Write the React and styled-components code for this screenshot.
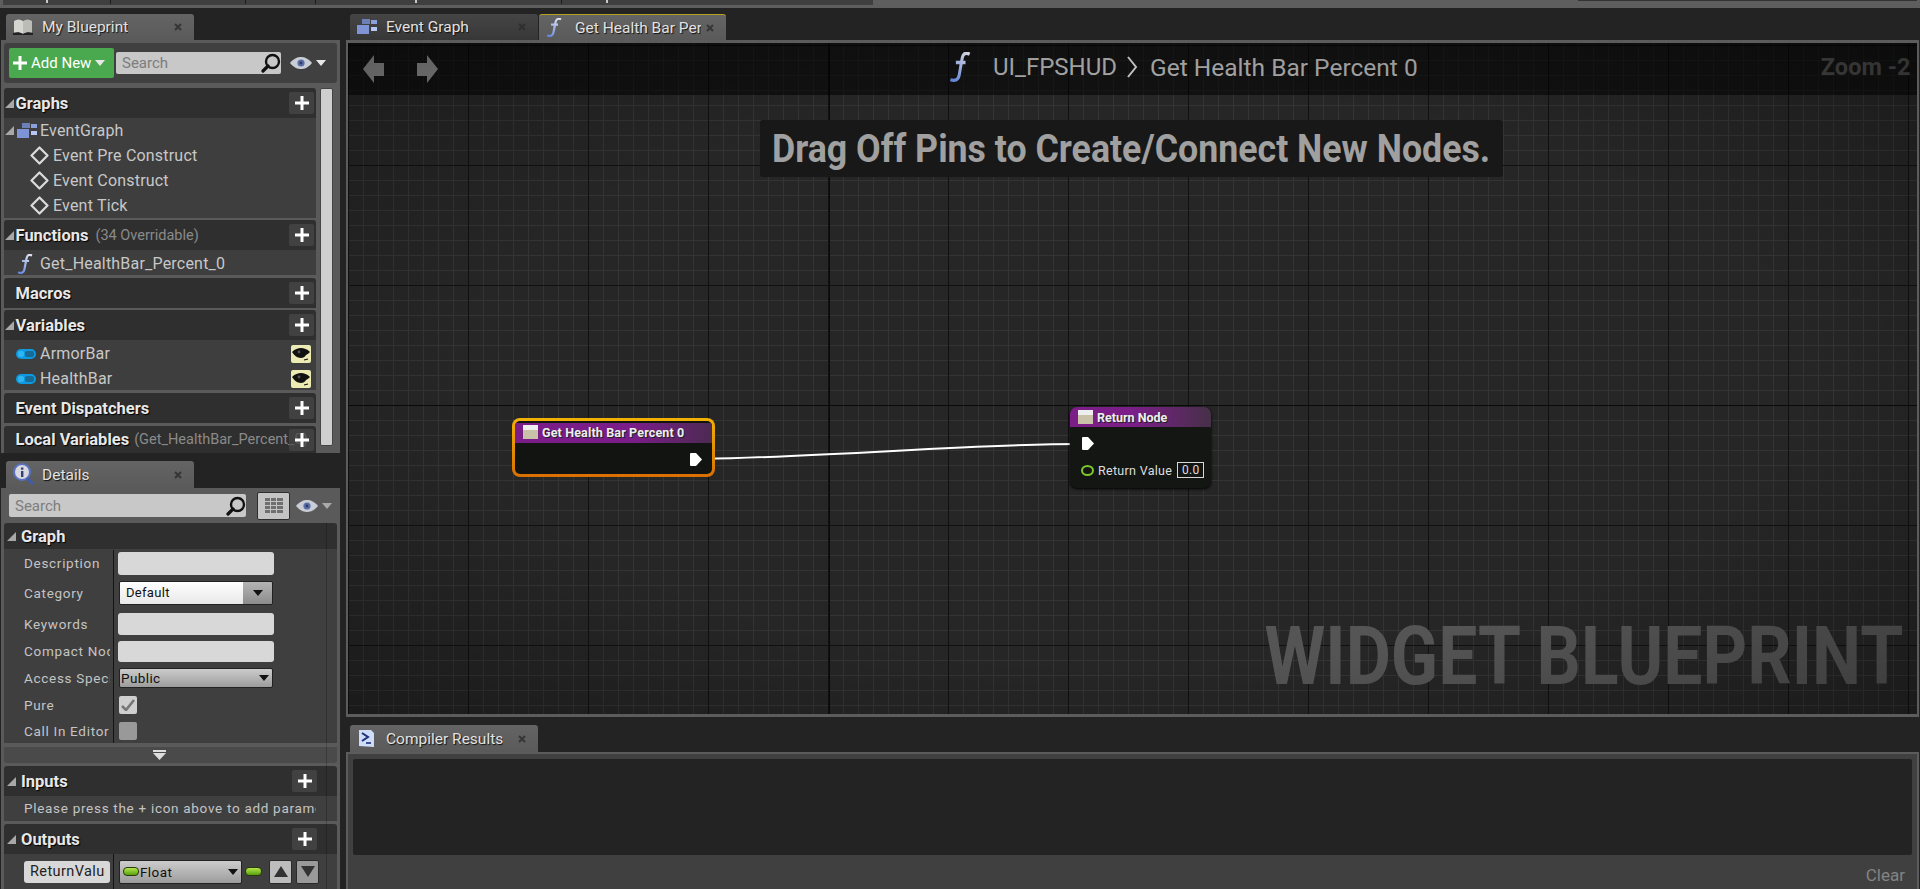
import React from 'react';
import styled, { createGlobalStyle } from 'styled-components';

const GlobalStyle = createGlobalStyle`
  html, body {
    margin: 0;
    padding: 0;
    height: 100%;
    overflow: hidden;
    background: #232323;
  }
  body {
    font-family: Roboto, "Liberation Sans", sans-serif;
    font-size: 14px;
    color: #d8d8d8;
  }
`;

/* icons */

const PlusIcon = ({ size = 14 }) => (
  <svg width={size} height={size} viewBox="0 0 14 14">
    <path d="M5.500 0h3v5.500H14v3H8.500V14h-3V8.500H0v-3h5.500z" fill="#fff" />
  </svg>
);

const Caret = ({ color = '#e8e8e8', w = 10, h = 6 }) => (
  <svg width={w} height={h} viewBox="0 0 10 6">
    <path d="M0 0h10L5 6z" fill={color} />
  </svg>
);

const Eye = () => (
  <svg width="22" height="12" viewBox="0 0 22 12">
    <path d="M0 6C4 1 8 0 11 0s7 1 11 6c-4 5-8 6-11 6S4 11 0 6z" fill="#c9cdd6" />
    <circle cx="11" cy="6" r="3.600" fill="#5a6ea8" />
    <circle cx="11" cy="6" r="1.400" fill="#2e3a66" />
  </svg>
);

const Magnifier = ({ size = 20 }) => (
  <svg width={size} height={size} viewBox="0 0 20 20">
    <circle cx="11.500" cy="8.500" r="6.500" fill="none" stroke="#111" strokeWidth="2.400" />
    <path d="M7 13l-5 5" stroke="#111" strokeWidth="3.200" strokeLinecap="round" />
  </svg>
);

const Triangle = () => (
  <svg width="9" height="9" viewBox="0 0 9 9">
    <path d="M9 0v9H0z" fill="#a8a8a8" />
  </svg>
);

const GraphIcon = ({ w = 20, h = 16 }) => (
  <svg width={w} height={h} viewBox="0 0 20 16">
    <rect x="5" y="0" width="8" height="5" fill="#6e7fb8" />
    <rect x="14" y="1" width="6" height="4" fill="#8aa0dc" />
    <rect x="0" y="6" width="12" height="9" fill="#7f94d6" />
    <rect x="14" y="8" width="6" height="4" fill="#b6c6f2" />
  </svg>
);

const EventIcon = () => (
  <svg width="19" height="19" viewBox="0 0 19 19">
    <path d="M9.500 1.500L17.500 9.500 9.500 17.500 1.500 9.500z" fill="none" stroke="#dcdcdc" strokeWidth="2.200" strokeLinejoin="round" />
  </svg>
);

const FuncIcon = ({ w = 16, h = 20 }) => (
  <svg width={w} height={h} viewBox="0 0 16 20" preserveAspectRatio="none">
    <defs>
      <linearGradient id="fn" gradientUnits="userSpaceOnUse" x1="1" y1="20" x2="15" y2="0">
        <stop offset="0" stopColor="#5f80dc" />
        <stop offset="1" stopColor="#e8eaf4" />
      </linearGradient>
    </defs>
    <path
      d="M15 1.500C12 0 10.200 1 9.500 4.500L7.500 15C7 18.500 4.500 19.500 1 18.500M5 7h7"
      fill="none"
      stroke="url(#fn)"
      strokeWidth="2.200"
    />
  </svg>
);

const VarPill = () => (
  <svg width="20" height="10" viewBox="0 0 20 10">
    <rect x="0" y="0" width="20" height="10" rx="5" fill="#0d9ae0" />
    <rect x="9" y="2" width="9" height="6" rx="2" fill="#1a6a96" />
    <rect x="2" y="2" width="6" height="6" rx="2" fill="#2fb6f2" />
  </svg>
);

const EyeBadge = () => (
  <svg width="20" height="18" viewBox="0 0 20 18">
    <rect width="20" height="18" rx="2" fill="#ecebb4" />
    <path d="M1 7c3-3 6-4 9-4s6 1 9 4c-1 1-2 2-4 3-1 2-3 3-5 3-4 0-7-3-9-6z" fill="#111" />
    <circle cx="8" cy="7" r="1.400" fill="#555" />
    <path d="M13 15l4-1" stroke="#111" strokeWidth="1.200" />
  </svg>
);

const BookIcon = () => (
  <svg width="20" height="18" viewBox="0 0 20 18">
    <path d="M1 3c3-2 6-2 9 0v13c-3-2-6-2-9 0z" fill="#d6d6d0" />
    <path d="M10 3c3-2 6-2 9 0v13c-3-2-6-2-9 0z" fill="#bcbcb6" />
    <path d="M0 15c3-1 7-1 10 1 3-2 7-2 10-1v2H0z" fill="#222" />
  </svg>
);

const InfoIcon = () => (
  <svg width="21" height="23" viewBox="0 0 21 23">
    <circle cx="9" cy="9" r="8" fill="#d8d8e0" stroke="#5a72c0" strokeWidth="2" />
    <rect x="8" y="8" width="2.400" height="6" fill="#33406c" />
    <rect x="8" y="4.500" width="2.400" height="2.200" fill="#33406c" />
    <path d="M14 15l6 6" stroke="#3f5bb4" strokeWidth="2.600" />
  </svg>
);

const ConsoleIcon = () => (
  <svg width="18" height="19" viewBox="0 0 18 19">
    <path d="M2 1h12l3 3v14l-15-1z" fill="#cfdcf8" />
    <path d="M5 4l6 4-6 4" fill="none" stroke="#1c2f78" strokeWidth="2" />
    <path d="M9 14h5" stroke="#1c2f78" strokeWidth="1.600" />
  </svg>
);

const ListIcon = () => (
  <svg width="18" height="18" viewBox="0 0 18 18">
    {[1, 5, 9, 13].map(y => (
      <g key={y} fill="#6f6f6f">
        <rect x="0" y={y} width="5" height="3" />
        <rect x="6" y={y} width="5" height="3" />
        <rect x="12" y={y} width="6" height="3" />
      </g>
    ))}
  </svg>
);

const CloseIcon = () => (
  <svg width="8" height="8" viewBox="0 0 8 8">
    <path d="M1 1l6 6M7 1L1 7" stroke="#2c2c2c" strokeWidth="2" />
  </svg>
);

const NavArrow = ({ flip }) => (
  <svg width="22" height="29" viewBox="0 0 22 29" style={flip ? { transform: 'scaleX(-1)' } : undefined}>
    <path d="M11 0L0 14l11 14V21h10V8H11z" fill="#858585" />
  </svg>
);

const ExecPin = () => (
  <svg width="12" height="13" viewBox="0 0 12 13">
    <path d="M0 1a1 1 0 0 1 1-1h5l6 6.500L6 13H1a1 1 0 0 1-1-1z" fill="#fff" />
  </svg>
);

const NodeGlyph = () => (
  <svg width="15" height="14" viewBox="0 0 15 14">
    <rect width="15" height="5" fill="#eee" />
    <rect y="5" width="15" height="9" fill="#c9c2a8" />
  </svg>
);

const Check = () => (
  <svg width="14" height="12" viewBox="0 0 14 12">
    <path d="M1 7l4 4 8-10" fill="none" stroke="#777" strokeWidth="2.600" />
  </svg>
);

/* page */

const GRAPHS = ['Event Pre Construct', 'Event Construct', 'Event Tick'];

function App() {
  return (
    <Page>
      <GlobalStyle />
      <TopStrip>
        <TopBar>
          <TopTick $left={43} $light />
          <TopTick $left={107} />
          <TopTick $left={242} />
          <TopTick $left={312} />
          <TopTick $left={412} $light />
          <TopTick $left={558} />
          <TopTick $left={603} $light />
        </TopBar>
        <TopRightLine />
      </TopStrip>
      <Columns>
        <LeftColumn>
          <TabBar>
            <Tab $w={188}>
              <TabIcon><BookIcon /></TabIcon>
              <TabLabel>My Blueprint</TabLabel>
              <TabClose><CloseIcon /></TabClose>
            </Tab>
          </TabBar>
          <BlueprintPanel>
            <Toolbar>
              <AddNew>
                <PlusIcon />
                <span>Add New</span>
                <Caret />
              </AddNew>
              <SearchBox $w={165} $h={22}>
                <SearchHint>Search</SearchHint>
                <Magnifier />
              </SearchBox>
              <EyeButton>
                <Eye />
                <Caret />
              </EyeButton>
            </Toolbar>
            <TreeArea>
              <Tree>
                <SectionHeader $gap={0}>
                  <Triangle />
                  <HeaderTitle>Graphs</HeaderTitle>
                  <AddButton><PlusIcon /></AddButton>
                </SectionHeader>
                <SectionBody>
                  <TreeRow $indent={1} $gap={3}>
                    <Triangle />
                    <GraphIcon />
                    <span>EventGraph</span>
                  </TreeRow>
                  {GRAPHS.map(name => (
                    <TreeRow key={name} $indent={26} $gap={4}>
                      <EventIcon />
                      <span>{name}</span>
                    </TreeRow>
                  ))}
                </SectionBody>

                <SectionHeader>
                  <Triangle />
                  <HeaderTitle>Functions</HeaderTitle>
                  <HeaderNote>(34 Overridable)</HeaderNote>
                  <AddButton><PlusIcon /></AddButton>
                </SectionHeader>
                <SectionBody>
                  <TreeRow $indent={13} $gap={7} $low>
                    <FuncIcon />
                    <span>Get_HealthBar_Percent_0</span>
                  </TreeRow>
                </SectionBody>

                <SectionHeader $gap={3}>
                  <TriangleGap />
                  <HeaderTitle>Macros</HeaderTitle>
                  <AddButton><PlusIcon /></AddButton>
                </SectionHeader>

                <SectionHeader>
                  <Triangle />
                  <HeaderTitle>Variables</HeaderTitle>
                  <AddButton><PlusIcon /></AddButton>
                </SectionHeader>
                <SectionBody>
                  <TreeRow $indent={12} $gap={4} $low>
                    <VarPill />
                    <span>ArmorBar</span>
                    <EyeSlot><EyeBadge /></EyeSlot>
                  </TreeRow>
                  <TreeRow $indent={12} $gap={4} $low>
                    <VarPill />
                    <span>HealthBar</span>
                    <EyeSlot><EyeBadge /></EyeSlot>
                  </TreeRow>
                </SectionBody>

                <SectionHeader $gap={3}>
                  <TriangleGap />
                  <HeaderTitle>Event Dispatchers</HeaderTitle>
                  <AddButton><PlusIcon /></AddButton>
                </SectionHeader>

                <SectionHeader $gap={3} $clip>
                  <TriangleGap />
                  <HeaderTitle>Local Variables</HeaderTitle>
                  <HeaderNote $under>(Get_HealthBar_Percent_0)</HeaderNote>
                  <AddButton><PlusIcon /></AddButton>
                </SectionHeader>
              </Tree>
              <ScrollTrack />
            </TreeArea>
          </BlueprintPanel>

          <DetailsTabBar>
            <Tab $w={188}>
              <TabIcon><InfoIcon /></TabIcon>
              <TabLabel>Details</TabLabel>
              <TabClose><CloseIcon /></TabClose>
            </Tab>
          </DetailsTabBar>
          <DetailsPanel>
            <DetailsSearchRow>
              <SearchBox $w={237} $h={23}>
                <SearchHint>Search</SearchHint>
                <Magnifier />
              </SearchBox>
              <GridButton><ListIcon /></GridButton>
              <EyeButton $dim>
                <Eye />
                <Caret color="#aaa" />
              </EyeButton>
            </DetailsSearchRow>
            <DetailsBody>
              <DetailHeader>
                <Triangle />
                <HeaderTitle $details>Graph</HeaderTitle>
              </DetailHeader>
              <PropTable>
                <PropRow $h={26}>
                  <PropName>Description</PropName>
                  <PropValue><TextInput $h={23} /></PropValue>
                </PropRow>
                <PropRow $h={34}>
                  <PropName>Category</PropName>
                  <PropValue>
                    <ComboBox>
                      <ComboText>Default</ComboText>
                      <ComboArrow><Caret color="#111" /></ComboArrow>
                    </ComboBox>
                  </PropValue>
                </PropRow>
                <PropRow $h={27}>
                  <PropName>Keywords</PropName>
                  <PropValue><TextInput $h={22} /></PropValue>
                </PropRow>
                <PropRow $h={28}>
                  <PropName>Compact Node Title</PropName>
                  <PropValue><TextInput $h={21} /></PropValue>
                </PropRow>
                <PropRow $h={26}>
                  <PropName>Access Specifier</PropName>
                  <PropValue>
                    <SelectBox $w={154}>
                      <span>Public</span>
                      <Caret color="#111" />
                    </SelectBox>
                  </PropValue>
                </PropRow>
                <PropRow $h={27}>
                  <PropName>Pure</PropName>
                  <PropValue><CheckBox><Check /></CheckBox></PropValue>
                </PropRow>
                <PropRow $h={25}>
                  <PropName>Call In Editor</PropName>
                  <PropValue><CheckBox $off /></PropValue>
                </PropRow>
              </PropTable>
              <ExpandStrip>
                <svg width="13" height="10" viewBox="0 0 13 10">
                  <path d="M0 0h13v2H0zM0 3h13L6.500 10z" fill="#ddd" />
                </svg>
              </ExpandStrip>

              <DetailHeader $tall>
                <Triangle />
                <HeaderTitle $details>Inputs</HeaderTitle>
                <AddButton $details><PlusIcon /></AddButton>
              </DetailHeader>
              <HintRow><HintText>Please press the + icon above to add parameters</HintText></HintRow>

              <DetailHeader $tall>
                <Triangle />
                <HeaderTitle $details>Outputs</HeaderTitle>
                <AddButton $details><PlusIcon /></AddButton>
              </DetailHeader>
              <OutputRow>
                <NameField><NameText>ReturnValue</NameText></NameField>
                <OutputControls>
                  <SelectBox $w={123} $pad={3}>
                    <TypeLabel><TypePill />Float</TypeLabel>
                    <Caret color="#111" />
                  </SelectBox>
                  <TypePill $gap />
                  <MoveButton>
                    <svg width="14" height="11" viewBox="0 0 14 11"><path d="M7 0l7 11H0z" fill="#333" /></svg>
                  </MoveButton>
                  <MoveButton $dim>
                    <svg width="14" height="11" viewBox="0 0 14 11"><path d="M0 0h14L7 11z" fill="#333" /></svg>
                  </MoveButton>
                </OutputControls>
              </OutputRow>
            </DetailsBody>
          </DetailsPanel>
        </LeftColumn>

        <RightColumn>
          <TabBar $graph>
            <Tab $w={188} $inactive>
              <TabIcon><GraphIcon /></TabIcon>
              <TabLabel>Event Graph</TabLabel>
              <TabClose><CloseIcon /></TabClose>
            </Tab>
            <Tab $w={187} $active>
              <TabIcon><FuncIcon w={16} h={19} /></TabIcon>
              <TabLabel $w={126}>Get Health Bar Percent 0</TabLabel>
              <TabClose><CloseIcon /></TabClose>
            </Tab>
          </TabBar>

          <GraphFrame>
            <GraphCanvas>
              <TitleBar>
                <NavGroup>
                  <NavArrow />
                  <NavArrow flip />
                </NavGroup>
                <Breadcrumb>
                  <FuncIcon w={22} h={30} />
                  <CrumbPrimary>UI_FPSHUD</CrumbPrimary>
                  <CrumbSep viewBox="0 0 12 24" width="12" height="24">
                    <path d="M2 2l8 10-8 10" fill="none" stroke="#c8c8c8" strokeWidth="2" />
                  </CrumbSep>
                  <CrumbName>Get Health Bar Percent 0</CrumbName>
                </Breadcrumb>
                <ZoomLabel>Zoom -2</ZoomLabel>
              </TitleBar>

              <HintBanner>
                <HintBannerText>Drag Off Pins to Create/Connect New Nodes.</HintBannerText>
              </HintBanner>

              <Wire viewBox="0 0 1568 670" width="1568" height="670">
                <path d="M354 416 C 500 413, 620 401, 734 401" fill="none" stroke="#fff" strokeWidth="2" />
              </Wire>

              <NodeSelection>
                <NodeInner>
                  <NodeTitle $full>
                    <NodeGlyph />
                    <span>Get Health Bar Percent 0</span>
                  </NodeTitle>
                  <PinRowRight>
                    <ExecPin />
                  </PinRowRight>
                </NodeInner>
              </NodeSelection>

              <ReturnNode>
                <NodeTitle>
                  <NodeGlyph />
                  <span>Return Node</span>
                </NodeTitle>
                <PinRowLeft>
                  <ExecPin />
                </PinRowLeft>
                <ReturnRow>
                  <FloatPin />
                  <span>Return Value</span>
                  <ValueBox>0.0</ValueBox>
                </ReturnRow>
              </ReturnNode>

              <Watermark>WIDGET BLUEPRINT</Watermark>
            </GraphCanvas>
          </GraphFrame>

          <CompilerTabBar $graph>
            <Tab $w={188}>
              <TabIcon><ConsoleIcon /></TabIcon>
              <TabLabel>Compiler Results</TabLabel>
              <TabClose><CloseIcon /></TabClose>
            </Tab>
          </CompilerTabBar>
          <CompilerPanel>
            <CompilerLog />
            <CompilerFooter>
              <ClearLabel>Clear</ClearLabel>
            </CompilerFooter>
          </CompilerPanel>
        </RightColumn>
      </Columns>
    </Page>
  );
}

const Page = styled.div`
  width: 1920px;
  height: 889px;
  overflow: hidden;
  background: #232323;
  display: flex;
  flex-direction: column;
`;

const TopStrip = styled.div`
  height: 8px;
  flex: none;
  display: flex;
  padding-left: 3px;
  background: #5e5e5e;
`;

const TopBar = styled.div`
  position: relative;
  width: 870px;
  height: 5px;
  background: #3f3f3f;
`;

const TopTick = styled.i`
  position: absolute;
  left: ${p => p.$left}px;
  top: 0;
  width: ${p => (p.$light ? 2 : 1)}px;
  height: ${p => (p.$light ? 3 : 4)}px;
  background: ${p => (p.$light ? '#c8c8c8' : '#1c1c1c')};
`;

const TopRightLine = styled.div`
  width: 339px;
  height: 1px;
  margin-left: 705px;
  background: #333;
`;

const Columns = styled.div`
  flex: 1;
  display: flex;
  min-height: 0;
`;

const LeftColumn = styled.div`
  width: 346px;
  flex: none;
  display: flex;
  flex-direction: column;
`;

const RightColumn = styled.div`
  flex: 1;
  min-width: 0;
  display: flex;
  flex-direction: column;
  padding-right: 1px;
`;

const TabBar = styled.div`
  display: flex;
  height: 26px;
  margin-top: 6px;
  padding-left: ${p => (p.$graph ? 4 : 6)}px;
  gap: 1px;
  flex: none;
`;

const DetailsTabBar = styled(TabBar)`
  margin-top: 8px;
  height: 27px;
`;

const CompilerTabBar = styled(TabBar)`
  margin-top: 8px;
  height: 27px;
`;

const Tab = styled.div`
  position: relative;
  width: ${p => p.$w}px;
  display: flex;
  align-items: center;
  padding-left: 7px;
  box-sizing: border-box;
  border-radius: 3px 3px 0 0;
  background: ${p => (p.$inactive ? 'linear-gradient(#454545, #373737)' : 'linear-gradient(#646464, #5a5a5a)')};
  border-top: ${p => (p.$active ? '1px solid #b8a020' : 'none')};
`;

const TabIcon = styled.div`
  width: 29px;
  flex: none;
  display: flex;
  align-items: center;
`;

const TabLabel = styled.span`
  font-size: 15.500px;
  color: #e2e2e2;
  text-shadow: 1px 1px 1px #111;
  white-space: nowrap;
  overflow: hidden;
  ${p => p.$w && `width: ${p.$w}px;`}
`;

const TabClose = styled.span`
  position: absolute;
  right: 12px;
  top: 50%;
  transform: translateY(-50%);
  display: flex;
  opacity: .8;
`;

const BlueprintPanel = styled.div`
  width: 339px;
  height: 413px;
  margin-left: 1px;
  box-sizing: border-box;
  padding: 3px 3px 0;
  background: #5a5a5a;
  overflow: hidden;
  flex: none;
`;

const Toolbar = styled.div`
  height: 40px;
  box-sizing: border-box;
  display: flex;
  align-items: center;
  padding-left: 5px;
  gap: 2px;
  background: #404040;
  border-radius: 3px;
`;

const AddNew = styled.div`
  width: 105px;
  height: 30px;
  flex: none;
  box-sizing: border-box;
  display: flex;
  align-items: center;
  gap: 4px;
  padding-left: 4px;
  background: #4aa94f;
  border-radius: 2px;
  color: #fff;
  font-size: 15px;
`;

const SearchBox = styled.div`
  width: ${p => p.$w}px;
  height: ${p => p.$h}px;
  flex: none;
  box-sizing: border-box;
  display: flex;
  align-items: center;
  justify-content: space-between;
  padding: 0 0 0 6px;
  background: #c8c8c8;
  border-radius: 2px;
`;

const SearchHint = styled.span`
  font-size: 15px;
  color: #7d7d7d;
`;

const EyeButton = styled.div`
  display: flex;
  align-items: center;
  gap: 4px;
  margin-left: ${p => (p.$dim ? 0 : 7)}px;
`;

const TreeArea = styled.div`
  display: flex;
  gap: 4px;
  padding-top: 5px;
  background: #5a5a5a;
`;

const Tree = styled.div`
  width: 312px;
  flex: none;
  display: flex;
  flex-direction: column;
`;

const ScrollTrack = styled.div`
  width: 13px;
  height: 358px;
  flex: none;
  background: #cfcfcf;
  border: 1px solid #454545;
  border-radius: 2px;
  box-sizing: border-box;
`;

const SectionHeader = styled.div`
  height: ${p => (p.$clip ? 27 : 30)}px;
  flex: none;
  display: flex;
  align-items: center;
  padding-left: 1px;
  background: #2f2f2f;
  border-radius: 3px 3px 0 0;
  margin-top: ${p => p.$gap ?? 2}px;
  overflow: hidden;
`;

const HeaderTitle = styled.span`
  margin-left: ${p => (p.$details ? 5 : 1.5)}px;
  font-size: 16.500px;
  font-weight: 700;
  color: #e8e8e8;
  text-shadow: 1px 1px 1px #000;
  white-space: nowrap;
`;

const HeaderNote = styled.span`
  margin-left: ${p => (p.$under ? 5 : 7)}px;
  margin-right: ${p => (p.$under ? -30 : 0)}px;
  font-size: 14.500px;
  color: #8a8a8a;
  white-space: nowrap;
`;

const TriangleGap = styled.span`
  width: 9px;
  flex: none;
`;

const AddButton = styled.div`
  position: relative;
  margin-left: auto;
  width: 25px;
  height: 22px;
  margin-right: ${p => (p.$details ? 20 : 2)}px;
  flex: none;
  display: flex;
  align-items: center;
  justify-content: center;
  background: rgba(72, 72, 72, .7);
  border-radius: 2px;
`;

const SectionBody = styled.div`
  background: #3e3e3e;
  display: flex;
  flex-direction: column;
`;

const TreeRow = styled.div`
  height: 25px;
  box-sizing: border-box;
  display: flex;
  align-items: center;
  gap: ${p => p.$gap}px;
  padding-left: ${p => p.$indent}px;
  padding-top: ${p => (p.$low ? 2 : 0)}px;
  font-size: 16px;
  letter-spacing: .2px;
  color: #c8c8c8;
`;

const EyeSlot = styled.div`
  margin-left: auto;
  margin-right: 5px;
  display: flex;
`;

const DetailsPanel = styled.div`
  width: 339px;
  margin-left: 1px;
  flex: 1;
  min-height: 0;
  box-sizing: border-box;
  background: #5a5a5a;
  padding: 0 3px;
  overflow: hidden;
`;

const DetailsSearchRow = styled.div`
  height: 35px;
  display: flex;
  align-items: center;
  padding-left: 5px;
`;

const GridButton = styled.div`
  width: 33px;
  height: 28px;
  margin: 0 6px 0 11px;
  flex: none;
  box-sizing: border-box;
  display: flex;
  align-items: center;
  justify-content: center;
  background: #c4c4c4;
  border: 1px solid #2e2e2e;
  border-radius: 2px;
`;

const DetailsBody = styled.div`
  position: relative;
  display: flex;
  flex-direction: column;

  &::after {
    content: '';
    position: absolute;
    left: 322px;
    top: 0;
    bottom: 0;
    width: 1px;
    background: rgba(0, 0, 0, .22);
  }
`;

const DetailHeader = styled.div`
  height: ${p => (p.$tall ? 30 : 26)}px;
  flex: none;
  display: flex;
  align-items: center;
  padding-left: 3px;
  background: #2f2f2f;
  border-radius: 3px 3px 0 0;
  margin-top: ${p => (p.$tall ? 3 : 0)}px;
`;

const PropTable = styled.div`
  height: 194px;
  background: #3f3f3f;
  box-sizing: border-box;
  padding-top: 1px;
`;

const PropRow = styled.div`
  height: ${p => p.$h}px;
  display: grid;
  grid-template-columns: 109px 1fr;
  align-items: center;
`;

const PropName = styled.div`
  margin-right: 3px;
  padding-left: 20px;
  font-size: 13.500px;
  letter-spacing: .7px;
  color: #c4c4c4;
  white-space: nowrap;
  overflow: hidden;
`;

const PropValue = styled.div`
  height: 100%;
  box-sizing: border-box;
  padding-left: 4px;
  display: flex;
  align-items: center;
  border-left: 1px solid #141414;
`;

const TextInput = styled.div`
  width: 156px;
  height: ${p => p.$h}px;
  background: #d8d8d8;
  border-radius: 3px;
`;

const ComboBox = styled.div`
  width: 154px;
  height: 24px;
  margin-left: 1px;
  box-sizing: border-box;
  display: flex;
  border: 1px solid #222;
  border-radius: 2px;
  overflow: hidden;
`;

const ComboText = styled.div`
  flex: 1;
  padding-left: 6px;
  line-height: 22px;
  font-size: 13px;
  letter-spacing: .3px;
  color: #111;
  background: linear-gradient(#ffffff, #e8e8e8);
`;

const ComboArrow = styled.div`
  width: 29px;
  display: flex;
  align-items: center;
  justify-content: center;
  background: linear-gradient(#b4b4b4, #8c8c8c);
`;

const SelectBox = styled.div`
  width: ${p => p.$w}px;
  height: ${p => (p.$pad ? 24 : 20)}px;
  margin-left: 1px;
  flex: none;
  box-sizing: border-box;
  display: flex;
  align-items: center;
  justify-content: space-between;
  padding: 0 3px 0 ${p => p.$pad || 1}px;
  border: 1px solid #222;
  border-radius: 2px;
  background: linear-gradient(#cccccc, #b2b2b2 55%, #9c9c9c);
  font-size: 13.500px;
  letter-spacing: .4px;
  color: #111;
`;

const CheckBox = styled.div`
  width: 18px;
  height: 18px;
  margin-left: 1px;
  display: flex;
  align-items: center;
  justify-content: center;
  background: ${p => (p.$off ? '#999' : '#cfcfcf')};
  border-radius: 2px;
`;

const ExpandStrip = styled.div`
  margin-top: 4px;
  height: 16px;
  display: flex;
  align-items: center;
  justify-content: center;
  padding-right: 23px;
  background: #4a4a4a;
  border-radius: 0 0 3px 3px;
`;

const HintRow = styled.div`
  height: 25px;
  box-sizing: border-box;
  padding-bottom: 2px;
  display: flex;
  align-items: center;
  padding-left: 20px;
  background: #3f3f3f;
  overflow: hidden;
`;

const HintText = styled.span`
  width: 292px;
  overflow: hidden;
  white-space: nowrap;
  font-size: 13.500px;
  letter-spacing: .7px;
  color: #c4c4c4;
`;

const OutputRow = styled.div`
  height: 35px;
  display: grid;
  grid-template-columns: 109px 1fr;
  align-items: center;
  background: #3f3f3f;
`;

const NameField = styled.div`
  margin-left: 20px;
  width: 86px;
  height: 22px;
  box-sizing: border-box;
  padding: 0 5px 0 6px;
  background: #d8d8d8;
  border-radius: 3px;
`;

const NameText = styled.div`
  line-height: 22px;
  font-size: 14.500px;
  letter-spacing: .4px;
  color: #222;
  overflow: hidden;
  white-space: nowrap;
`;

const OutputControls = styled.div`
  height: 100%;
  display: flex;
  align-items: center;
  padding-left: 4px;
  border-left: 1px solid #141414;
`;

const TypeLabel = styled.span`
  display: flex;
  align-items: center;
  gap: 1px;
`;

const TypePill = styled.i`
  width: ${p => (p.$gap ? 17 : 16)}px;
  height: 9px;
  flex: none;
  box-sizing: border-box;
  margin-left: ${p => (p.$gap ? 3 : 0)}px;
  margin-right: ${p => (p.$gap ? 7 : 0)}px;
  border-radius: 4px;
  background: linear-gradient(#b5e64a, #58a00f);
  border: 1px solid #2a3a0a;
`;

const MoveButton = styled.div`
  width: 23px;
  height: 24px;
  margin-right: 4px;
  flex: none;
  display: flex;
  align-items: center;
  justify-content: center;
  background: ${p => (p.$dim ? '#9a9a9a' : '#bdbdbd')};
  border: 1px solid #2a2a2a;
  box-sizing: border-box;
  border-radius: 2px;
`;

const GraphFrame = styled.div`
  height: 677px;
  flex: none;
  box-sizing: border-box;
  border: 3px solid #5c5c5c;
  border-left-width: 2px;
  border-right-width: 2px;
`;

const GraphCanvas = styled.div`
  position: relative;
  width: 100%;
  height: 100%;
  overflow: hidden;
  background-color: #262626;
  background-image:
    linear-gradient(#0a0a0a, #0a0a0a),
    linear-gradient(90deg, #0a0a0a, #0a0a0a),
    linear-gradient(#111111 1px, transparent 1px),
    linear-gradient(90deg, #111111 1px, transparent 1px),
    linear-gradient(#343434 1px, transparent 1px),
    linear-gradient(90deg, #343434 1px, transparent 1px);
  background-size: 100% 1px, 1px 100%, 120px 120px, 120px 120px, 15px 15px, 15px 15px;
  background-position: 0 362px, 481px 0, 0 2px, 0 0, 0 2px, 0 0;
  background-repeat: no-repeat, no-repeat, repeat, repeat, repeat, repeat;

  &::after {
    content: '';
    position: absolute;
    inset: 0;
    pointer-events: none;
    background: radial-gradient(ellipse at center, transparent 60%, rgba(0, 0, 0, .3) 100%);
  }
`;

const TitleBar = styled.div`
  position: relative;
  height: 52px;
  display: flex;
  align-items: center;
  background: rgba(0, 0, 0, .55);
`;

const NavGroup = styled.div`
  display: flex;
  gap: 31px;
  padding-left: 15px;
`;

const Breadcrumb = styled.div`
  position: absolute;
  left: 601px;
  top: 8px;
  display: flex;
  align-items: center;
  height: 32px;
`;

const CrumbPrimary = styled.span`
  margin-left: 22px;
  font-size: 24px;
  color: #a8a8a8;
  white-space: nowrap;
`;

const CrumbSep = styled.svg`
  margin: 0 12px 0 9px;
`;

const CrumbName = styled.span`
  font-size: 24.500px;
  color: #a8a8a8;
  white-space: nowrap;
`;

const ZoomLabel = styled.span`
  position: absolute;
  right: 7px;
  top: 10px;
  font-size: 24px;
  font-weight: 700;
  color: #464646;
  transform-origin: right center;
  transform: scaleX(.98);
  white-space: nowrap;
`;

const HintBanner = styled.div`
  position: absolute;
  left: 412px;
  top: 77px;
  width: 743px;
  height: 57px;
  display: flex;
  align-items: center;
  justify-content: center;
  background: #181818;
  border-radius: 3px;
`;

const HintBannerText = styled.span`
  font-size: 38px;
  font-weight: 700;
  color: #a0a0a0;
  white-space: nowrap;
  transform: scaleX(.94);
`;

const Wire = styled.svg`
  position: absolute;
  left: 0;
  top: 0;
  pointer-events: none;
`;

const NodeSelection = styled.div`
  position: absolute;
  left: 164px;
  top: 375px;
  width: 203px;
  height: 59px;
  box-sizing: border-box;
  padding: 3px;
  border-radius: 8px;
  background: linear-gradient(#f2b205, #d96f00);
`;

const NodeInner = styled.div`
  height: 100%;
  border-radius: 5px;
  overflow: hidden;
  background: #111411;
`;

const NodeTitle = styled.div`
  height: 20px;
  box-sizing: border-box;
  display: flex;
  align-items: center;
  gap: 4px;
  padding-left: 8px;
  padding-bottom: ${p => (p.$full ? 2 : 0)}px;
  margin-top: ${p => (p.$full ? 2 : 0)}px;
  font-size: 12.500px;
  font-weight: 700;
  letter-spacing: ${p => (p.$full ? '.15px' : 0)};
  color: #eee;
  text-shadow: 1px 1px 0 #222;
  white-space: nowrap;
  background: ${p => (p.$full ? 'linear-gradient(90deg, #7a1d88 60%, #4c2a52)' : 'linear-gradient(90deg, #7b1e88 45%, #463048)')};
`;

const PinRowRight = styled.div`
  display: flex;
  justify-content: flex-end;
  padding: 10px 10px 0 0;
`;

const ReturnNode = styled.div`
  position: absolute;
  left: 722px;
  top: 364px;
  width: 141px;
  height: 81px;
  border-radius: 7px;
  overflow: hidden;
  background: #141614;
  box-shadow: 0 1px 3px #000;
`;

const PinRowLeft = styled.div`
  display: flex;
  padding: 10px 0 0 12px;
`;

const ReturnRow = styled.div`
  display: flex;
  align-items: center;
  gap: 4px;
  padding: 12px 0 0 11px;
  font-size: 12.500px;
  letter-spacing: .3px;
  color: #dedede;
  white-space: nowrap;
`;

const FloatPin = styled.i`
  width: 13px;
  height: 11px;
  flex: none;
  box-sizing: border-box;
  border: 2.500px solid #7ec82a;
  border-radius: 50%;
`;

const ValueBox = styled.span`
  width: 27px;
  height: 16px;
  margin-left: 1px;
  box-sizing: border-box;
  text-align: center;
  line-height: 15px;
  font-size: 12px;
  border: 1px solid #d8d8d8;
`;

const Watermark = styled.span`
  position: absolute;
  right: 14px;
  bottom: 17px;
  font-size: 82px;
  line-height: 1;
  font-weight: 700;
  color: #555555;
  white-space: nowrap;
  transform-origin: right center;
  transform: scaleX(.848);
`;

const CompilerPanel = styled.div`
  flex: 1;
  min-height: 0;
  display: flex;
  flex-direction: column;
  box-sizing: border-box;
  background: #404040;
  border-top: 2px solid #5c5c5c;
  border-left: 2px solid #5c5c5c;
  border-right: 2px solid #5c5c5c;
  padding: 5px 5px 0;
`;

const CompilerLog = styled.div`
  height: 96px;
  flex: none;
  background: #232323;
  border-radius: 2px;
`;

const CompilerFooter = styled.div`
  flex: 1;
  display: flex;
  justify-content: flex-end;
  align-items: center;
  padding: 6px 7px 0 0;
`;

const ClearLabel = styled.span`
  font-size: 17px;
  color: #848484;
`;

export default App;
